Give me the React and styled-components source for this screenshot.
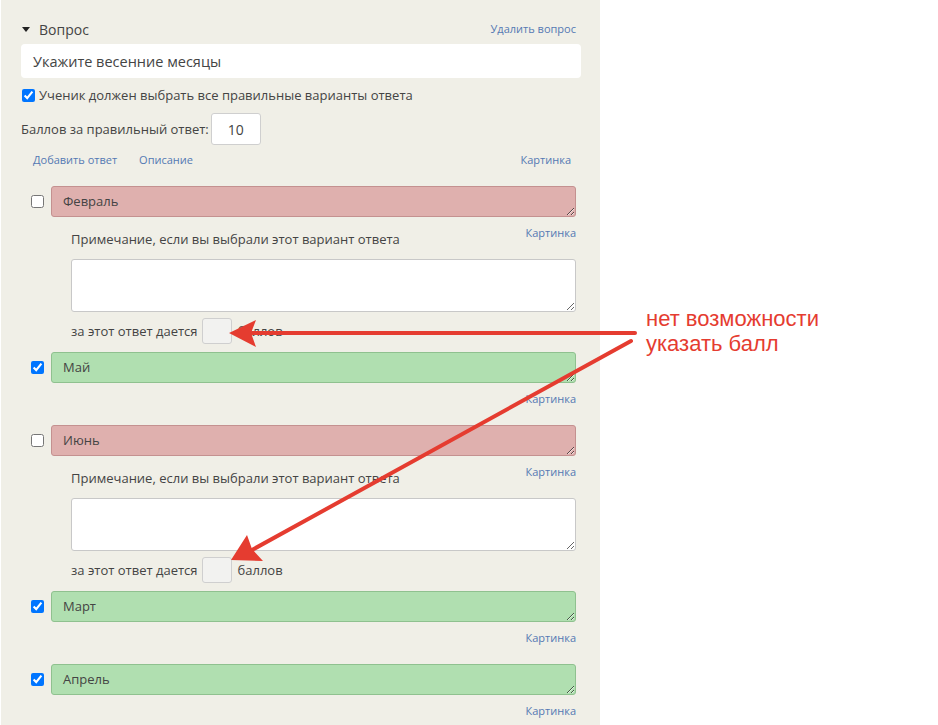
import styled, { createGlobalStyle } from 'styled-components';

const GlobalStyle = createGlobalStyle`
    html, body {
        margin: 0;
        padding: 0;
        background: #ffffff;
    }
    body {
        font-family: "Open Sans", "Liberation Sans", sans-serif;
        color: #444;
    }
`

const Page = styled.div`
    position: relative;
    width: 938px;
    height: 725px;
    overflow: hidden;
    display: flex;
    background: #ffffff;
`

const Panel = styled.div`
    width: 599px;
    margin-left: 1px;
    background: #f0efe7;
    box-sizing: border-box;
    padding: 20px 19px 0 20px;
`

const Header = styled.div`
    display: flex;
    justify-content: space-between;
    align-items: center;
    height: 18px;
    padding-right: 5px;
`

const Toggle = styled.div`
    display: flex;
    align-items: center;
    font-size: 14px;
    color: #444;

    &::before {
        content: '';
        width: 0;
        height: 0;
        border-left: 4px solid transparent;
        border-right: 4px solid transparent;
        border-top: 5px solid #222;
        margin: 0 9px 0 1px;
    }
`

const Link = styled.a`
    font-size: 11px;
    color: #5479b3;
    text-decoration: none;
    cursor: pointer;
    line-height: 14px;
`

const QuestionInput = styled.div`
    margin-top: 6px;
    height: 34px;
    background: #ffffff;
    border-radius: 4px;
    display: flex;
    align-items: center;
    padding-left: 12px;
    font-size: 14.5px;
    color: #444;
`

const CheckLine = styled.label`
    display: flex;
    align-items: center;
    margin-top: 9px;
    font-size: 13px;
    color: #444;
    height: 16px;

    input {
        margin: 0 4px 0 1px;
        width: 13px;
        height: 13px;
    }
`

const ScoreLine = styled.div`
    display: flex;
    align-items: center;
    margin-top: 10px;
    font-size: 13px;
    color: #444;
`

const ScoreBox = styled.div`
    margin-left: 2px;
    width: 48px;
    height: 30px;
    background: #fff;
    border: 1px solid #cfcfcf;
    border-radius: 3px;
    display: flex;
    align-items: center;
    justify-content: center;
    font-size: 14px;
    color: #444;
`

const Links = styled.div`
    display: flex;
    align-items: center;
    margin-top: 8px;
    padding: 0 10px 0 12px;
    gap: 22px;

    & > a:last-child {
        margin-left: auto;
    }
`

const Answers = styled.div`
    margin-top: 19px;
    padding-right: 5px;
`

const AnswerBlock = styled.div`
    margin-bottom: ${p => (p.$correct ? '19px' : '8px')};
`

const AnswerRow = styled.div`
    display: flex;
    align-items: center;

    input {
        margin: 0 7px 0 10px;
        width: 13px;
        height: 13px;
    }
`

const AnswerText = styled.textarea`
    flex: 1;
    height: 31px;
    box-sizing: border-box;
    resize: vertical;
    border-radius: 3px;
    border: 1px solid ${p => (p.$correct ? '#8fc18f' : '#c49190')};
    background: ${p => (p.$correct ? '#b0dfb0' : '#dfb0ae')};
    font-family: "Open Sans", "Liberation Sans", sans-serif;
    font-size: 13px;
    color: #444;
    padding: 6px 11px;
    line-height: 17px;
    outline: none;
    overflow: hidden;
`

const Extras = styled.div`
    padding-left: 50px;
`

const ImageLink = styled(Link)`
    display: block;
    text-align: right;
    margin-top: 9px;
`

const FloatLink = styled(Link)`
    float: right;
    margin-top: 9px;
`

const NoteLabel = styled.div`
    padding-top: 14px;
    font-size: 13px;
    line-height: 16px;
    color: #444;
`

const NoteArea = styled.textarea`
    display: block;
    width: 100%;
    height: 53px;
    box-sizing: border-box;
    margin-top: 12px;
    border: 1px solid #c8c8c8;
    border-radius: 3px;
    background: #fff;
    outline: none;
`

const PointsLine = styled.div`
    display: flex;
    align-items: center;
    margin-top: 6px;
    font-size: 13px;
    color: #444;
`

const PointsBox = styled.div`
    width: 28px;
    height: 24px;
    margin: 0 5px 0 5px;
    background: #f2f2f0;
    border: 1px solid #cfcfcf;
    border-radius: 3px;
`

const Annotation = styled.div`
    position: absolute;
    left: 646px;
    top: 306px;
    font-family: "Liberation Sans", Arial, sans-serif;
    font-size: 22px;
    line-height: 25px;
    color: #e53c30;
`

const Overlay = styled.svg`
    position: absolute;
    left: 0;
    top: 0;
    pointer-events: none;
`

const answers = [
    { text: 'Февраль', correct: false },
    { text: 'Май', correct: true },
    { text: 'Июнь', correct: false },
    { text: 'Март', correct: true },
    { text: 'Апрель', correct: true },
]

const Answer = ({ text, correct }) => (
    <AnswerBlock $correct={correct}>
        <AnswerRow>
            <input type="checkbox" defaultChecked={correct} />
            <AnswerText $correct={correct} defaultValue={text} readOnly />
        </AnswerRow>
        {correct ? (
            <ImageLink>Картинка</ImageLink>
        ) : (
            <Extras>
                <FloatLink>Картинка</FloatLink>
                <NoteLabel>Примечание, если вы выбрали этот вариант ответа</NoteLabel>
                <NoteArea readOnly />
                <PointsLine>
                    за этот ответ дается
                    <PointsBox />
                    баллов
                </PointsLine>
            </Extras>
        )}
    </AnswerBlock>
)

const App = () => {
    return (
        <Page>
            <GlobalStyle />
            <Panel>
                <Header>
                    <Toggle>Вопрос</Toggle>
                    <Link>Удалить вопрос</Link>
                </Header>
                <QuestionInput>Укажите весенние месяцы</QuestionInput>
                <CheckLine>
                    <input type="checkbox" defaultChecked />
                    Ученик должен выбрать все правильные варианты ответа
                </CheckLine>
                <ScoreLine>
                    Баллов за правильный ответ:
                    <ScoreBox>10</ScoreBox>
                </ScoreLine>
                <Links>
                    <Link>Добавить ответ</Link>
                    <Link>Описание</Link>
                    <Link>Картинка</Link>
                </Links>
                <Answers>
                    {answers.map(a => (
                        <Answer key={a.text} {...a} />
                    ))}
                </Answers>
            </Panel>

            <Annotation>
                нет возможности
                <br />
                указать балл
            </Annotation>
            <Overlay width="938" height="725" viewBox="0 0 938 725">
                <g fill="#e53c30" stroke="#e53c30" strokeLinecap="round">
                    <line x1="635" y1="333" x2="252" y2="333" strokeWidth="4" />
                    <polygon points="229,333 256,320 251,333 256,347" stroke="none" />
                    <line x1="631" y1="341" x2="252" y2="550" strokeWidth="4" />
                    <polygon points="231,560 247,535 252,549 263,561" stroke="none" />
                </g>
            </Overlay>
        </Page>
    )
}

export default App;
